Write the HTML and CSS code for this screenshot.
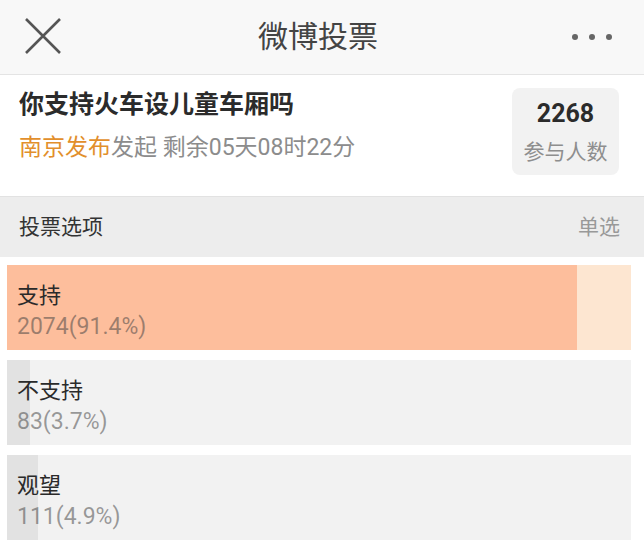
FILE: index.html
```html
<!DOCTYPE html>
<html lang="zh">
<head>
<meta charset="utf-8">
<title>微博投票</title>
<link rel="stylesheet" href="styles.css">
</head>
<body>
<div class="page">
  <header class="topbar">
    <svg class="close" width="36" height="36" viewBox="0 0 36 36" aria-hidden="true">
      <path d="M1 1 L35 35 M35 1 L1 35" stroke="#555" stroke-width="2.6" fill="none"/>
    </svg>
    <h1 class="topbar-title">微博投票</h1>
    <div class="more" aria-hidden="true"><span></span><span></span><span></span></div>
  </header>

  <section class="info">
    <div class="info-text">
      <h2 class="poll-title">你支持火车设儿童车厢吗</h2>
      <p class="poll-meta"><span class="author">南京发布</span>发起 剩余05天08时22分</p>
    </div>
    <div class="count-box">
      <div class="count-num">2268</div>
      <div class="count-label">参与人数</div>
    </div>
  </section>

  <div class="section-head">
    <span class="section-title">投票选项</span>
    <span class="section-type">单选</span>
  </div>

  <div class="options">
    <div class="option option-win">
      <div class="fill" style="width:91.4%"></div>
      <div class="option-text">
        <div class="option-label">支持</div>
        <div class="option-count">2074(91.4%)</div>
      </div>
    </div>
    <div class="option">
      <div class="fill" style="width:3.7%"></div>
      <div class="option-text">
        <div class="option-label">不支持</div>
        <div class="option-count">83(3.7%)</div>
      </div>
    </div>
    <div class="option">
      <div class="fill" style="width:4.9%"></div>
      <div class="option-text">
        <div class="option-label">观望</div>
        <div class="option-count">111(4.9%)</div>
      </div>
    </div>
  </div>
</div>
</body>
</html>
```

FILE: styles.css
```css
* { box-sizing: border-box; }
html, body { margin: 0; padding: 0; background: #fff; }
body {
  font-family: Roboto, "Noto Sans CJK SC", "Noto Sans", sans-serif;
  color: #333;
  width: 644px;
  height: 550px;
  overflow: hidden;
}
.page { width: 644px; }

.topbar {
  height: 75px;
  background: #f8f8f8;
  border-bottom: 1px solid #e4e4e4;
  display: grid;
  grid-template-columns: 1fr auto 1fr;
  align-items: center;
  padding: 0 32px 0 25px;
}
.close { display: block; margin-top: -2px; }
.topbar-title {
  margin: 0 0 0 -1px;
  font-size: 30px;
  font-weight: 400;
  color: #444;
  line-height: 36px;
}
.more {
  display: flex;
  gap: 11px;
  align-items: center;
  justify-content: flex-end;
  margin-top: -1px;
}
.more span {
  width: 6px; height: 6px; border-radius: 50%;
  background: #666; display: block;
}

.info {
  height: 122px;
  display: flex;
  justify-content: space-between;
  align-items: flex-start;
  padding: 13px 25px 0 19px;
  border-bottom: 1px solid #e2e2e2;
}
.poll-title {
  margin: 2px 0 0;
  font-size: 25px;
  font-weight: 700;
  line-height: 30px;
  color: #2b2b2b;
}
.poll-meta {
  margin: 13px 0 0;
  font-size: 23px;
  line-height: 30px;
  color: #8c8c8c;
}
.author { color: #e28f2c; }

.count-box {
  width: 107px;
  height: 87px;
  background: #f2f2f2;
  border-radius: 8px;
  display: flex;
  flex-direction: column;
  align-items: center;
  padding-top: 11px;
}
.count-num {
  font-size: 25px;
  font-weight: 700;
  line-height: 30px;
  color: #2b2b2b;
}
.count-label {
  margin-top: 10px;
  font-size: 21px;
  line-height: 26px;
  color: #8e8e8e;
}

.section-head {
  height: 60px;
  background: #ededed;
  display: flex;
  align-items: center;
  justify-content: space-between;
  padding: 0 24px 0 19px;
}
.section-title { font-size: 21px; color: #333; line-height: 28px; }
.section-type { font-size: 21px; color: #999; line-height: 28px; }

.options {
  width: 624px;
  margin-left: 7px;
  padding-top: 8px;
  display: flex;
  flex-direction: column;
  gap: 10px;
}
.option {
  position: relative;
  height: 85px;
  background: #f2f2f2;
  overflow: hidden;
}
.option .fill {
  position: absolute;
  left: 0; top: 0; bottom: 0;
  background: #e2e2e2;
}
.option-win { background: #fde6d1; }
.option-win .fill { background: #fdbe9c; }
.option-text {
  position: relative;
  padding: 16px 0 0 10px;
}
.option-label {
  font-size: 22px;
  line-height: 30px;
  color: #2a2a2a;
}
.option-count {
  margin-top: 1px;
  font-size: 23px;
  line-height: 30px;
  color: rgba(60, 60, 60, 0.5);
}
```
